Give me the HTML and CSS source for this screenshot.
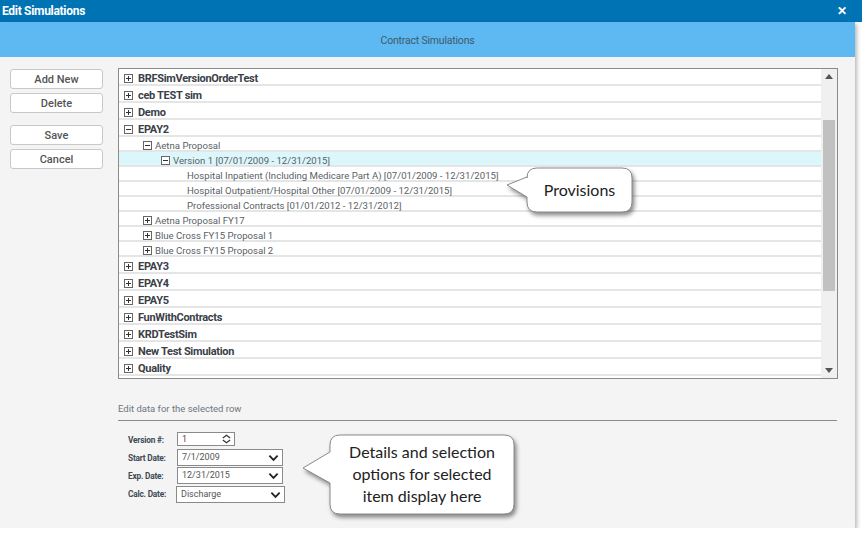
FILE: index.html
```html
<!DOCTYPE html>
<html lang="en">
<head>
  <meta charset="UTF-8">
  <meta name="viewport" content="width=device-width, initial-scale=1.0">
  <title>Edit Simulations</title>
  <link rel="stylesheet" href="styles.css">
</head>
<body>
  <div class="titlebar">
    <span class="title">Edit Simulations</span>
    <span class="close">&#x2715;</span>
  </div>
  <div class="dialog">
    <div class="band">Contract Simulations</div>
    <div class="content">
      <div class="top">
        <div class="actions">
          <button class="btn">Add New</button>
          <button class="btn">Delete</button>
          <button class="btn gap">Save</button>
          <button class="btn">Cancel</button>
        </div>
        <div class="tree">
          <div class="rows">
            <div class="row l1"><svg class="ico" viewBox="0 0 9 9"><rect x="0.5" y="0.5" width="8" height="8"/><path d="M2 4.5h5M4.5 2v5"/></svg><span>BRFSimVersionOrderTest</span></div>
            <div class="row l1"><svg class="ico" viewBox="0 0 9 9"><rect x="0.5" y="0.5" width="8" height="8"/><path d="M2 4.5h5M4.5 2v5"/></svg><span>ceb TEST sim</span></div>
            <div class="row l1"><svg class="ico" viewBox="0 0 9 9"><rect x="0.5" y="0.5" width="8" height="8"/><path d="M2 4.5h5M4.5 2v5"/></svg><span>Demo</span></div>
            <div class="row l1"><svg class="ico" viewBox="0 0 9 9"><rect x="0.5" y="0.5" width="8" height="8"/><path d="M2 4.5h5"/></svg><span>EPAY2</span></div>
            <div class="row l2"><svg class="ico" viewBox="0 0 9 9"><rect x="0.5" y="0.5" width="8" height="8"/><path d="M2 4.5h5"/></svg><span>Aetna Proposal</span></div>
            <div class="row l3 selected"><svg class="ico" viewBox="0 0 9 9"><rect x="0.5" y="0.5" width="8" height="8"/><path d="M2 4.5h5"/></svg><span>Version 1 [07/01/2009 - 12/31/2015]</span></div>
            <div class="row l4"><span>Hospital Inpatient (Including Medicare Part A) [07/01/2009 - 12/31/2015]</span></div>
            <div class="row l4"><span>Hospital Outpatient/Hospital Other [07/01/2009 - 12/31/2015]</span></div>
            <div class="row l4"><span>Professional Contracts [01/01/2012 - 12/31/2012]</span></div>
            <div class="row l2"><svg class="ico" viewBox="0 0 9 9"><rect x="0.5" y="0.5" width="8" height="8"/><path d="M2 4.5h5M4.5 2v5"/></svg><span>Aetna Proposal FY17</span></div>
            <div class="row l2"><svg class="ico" viewBox="0 0 9 9"><rect x="0.5" y="0.5" width="8" height="8"/><path d="M2 4.5h5M4.5 2v5"/></svg><span>Blue Cross FY15 Proposal 1</span></div>
            <div class="row l2"><svg class="ico" viewBox="0 0 9 9"><rect x="0.5" y="0.5" width="8" height="8"/><path d="M2 4.5h5M4.5 2v5"/></svg><span>Blue Cross FY15 Proposal 2</span></div>
            <div class="row l1"><svg class="ico" viewBox="0 0 9 9"><rect x="0.5" y="0.5" width="8" height="8"/><path d="M2 4.5h5M4.5 2v5"/></svg><span>EPAY3</span></div>
            <div class="row l1"><svg class="ico" viewBox="0 0 9 9"><rect x="0.5" y="0.5" width="8" height="8"/><path d="M2 4.5h5M4.5 2v5"/></svg><span>EPAY4</span></div>
            <div class="row l1"><svg class="ico" viewBox="0 0 9 9"><rect x="0.5" y="0.5" width="8" height="8"/><path d="M2 4.5h5M4.5 2v5"/></svg><span>EPAY5</span></div>
            <div class="row l1"><svg class="ico" viewBox="0 0 9 9"><rect x="0.5" y="0.5" width="8" height="8"/><path d="M2 4.5h5M4.5 2v5"/></svg><span>FunWithContracts</span></div>
            <div class="row l1"><svg class="ico" viewBox="0 0 9 9"><rect x="0.5" y="0.5" width="8" height="8"/><path d="M2 4.5h5M4.5 2v5"/></svg><span>KRDTestSim</span></div>
            <div class="row l1"><svg class="ico" viewBox="0 0 9 9"><rect x="0.5" y="0.5" width="8" height="8"/><path d="M2 4.5h5M4.5 2v5"/></svg><span>New Test Simulation</span></div>
            <div class="row l1"><svg class="ico" viewBox="0 0 9 9"><rect x="0.5" y="0.5" width="8" height="8"/><path d="M2 4.5h5M4.5 2v5"/></svg><span>Quality</span></div>
          </div>
          <div class="scrollbar">
            <svg class="arrow" viewBox="0 0 8 5"><path d="M0 5L4 0L8 5Z"/></svg>
            <div class="track"><div class="thumb"></div></div>
            <svg class="arrow" viewBox="0 0 8 5"><path d="M0 0L4 5L8 0Z"/></svg>
          </div>
        </div>
      </div>

      <div class="edit">
        <div class="edit-title">Edit data for the selected row</div>
        <div class="form">
          <div class="field">
            <label>Version #:</label>
            <div class="input short">1
              <svg class="spin" viewBox="0 0 12 10"><path d="M2 4L6 1L10 4M2 6L6 9L10 6"/></svg>
            </div>
          </div>
          <div class="field">
            <label>Start Date:</label>
            <div class="input select">7/1/2009
              <svg class="chev" viewBox="0 0 12 8"><path d="M1.5 1.5L6 6L10.5 1.5"/></svg>
            </div>
          </div>
          <div class="field">
            <label>Exp. Date:</label>
            <div class="input select">12/31/2015
              <svg class="chev" viewBox="0 0 12 8"><path d="M1.5 1.5L6 6L10.5 1.5"/></svg>
            </div>
          </div>
          <div class="field">
            <label>Calc. Date:</label>
            <div class="input select wide">Discharge
              <svg class="chev" viewBox="0 0 12 8"><path d="M1.5 1.5L6 6L10.5 1.5"/></svg>
            </div>
          </div>
        </div>
      </div>

      <div class="callout callout-provisions">
        <svg class="bubble" viewBox="0 0 135 52">
          <path d="M32 2H117Q127 2 127 12V36Q127 46 117 46H32Q22 46 22 36V31L2 19L22 11V12Q22 2 32 2Z"/>
        </svg>
        <div class="callout-text">Provisions</div>
      </div>

      <div class="callout callout-details">
        <svg class="bubble" viewBox="0 0 220 88">
          <path d="M39 2H203Q213 2 213 12V71Q213 81 203 81H39Q29 81 29 71V50L2 35L29 19V12Q29 2 39 2Z"/>
        </svg>
        <div class="callout-text">Details and selection<br>options for selected<br>item display here</div>
      </div>
    </div>
  </div>
</body>
</html>
```

FILE: styles.css
```css
body {
  margin: 0;
  background: #fff;
  font-family: Roboto, "Liberation Sans", sans-serif;
}
.titlebar {
  height: 22px;
  background-color: #0073b4;
  color: #fff;
  display: flex;
  align-items: center;
  justify-content: space-between;
  padding: 0 15px 0 2px;
}
.title {
  font-weight: bold;
  font-size: 12px;
  letter-spacing: -0.3px;
}
.close {
  font-size: 12px;
  font-weight: bold;
}
.dialog {
  width: 855px;
  box-shadow: 2px 2px 4px rgba(0, 0, 0, 0.28);
}
.band {
  height: 35px;
  background-color: #5eb8f1;
  color: #3f5a6e;
  font-size: 10.5px;
  letter-spacing: -0.2px;
  text-align: center;
  line-height: 37px;
}
.content {
  position: relative;
  height: 471px;
  background-color: #f4f4f4;
  padding-top: 11px;
  box-sizing: border-box;
}
.top {
  display: flex;
}
.actions {
  width: 93px;
  margin-left: 10px;
  margin-top: 1px;
  display: flex;
  flex-direction: column;
}
.btn {
  height: 20px;
  margin-bottom: 4px;
  background: #fff;
  border: 1px solid #c8c8c8;
  border-radius: 3px;
  font-family: Roboto, sans-serif;
  font-size: 11px;
  font-weight: 500;
  color: #555;
  padding: 0;
}
.gap {
  margin-top: 8px;
}
.tree {
  margin-left: 15px;
  width: 720px;
  height: 311px;
  border: 1px solid #8a8a8a;
  box-sizing: border-box;
  background: #fff;
  display: flex;
  overflow: hidden;
}
.rows {
  width: 702px;
}
.row {
  display: flex;
  align-items: center;
  box-sizing: border-box;
  border-bottom: 2px solid #e5e5e5;
  white-space: nowrap;
}
.row.l1 {
  height: 17px;
  padding-left: 5px;
  padding-top: 4px;
  font-weight: bold;
  font-size: 11px;
  letter-spacing: -0.3px;
  color: #3a4047;
}
.row.l2, .row.l3, .row.l4 {
  height: 15px;
  padding-top: 3px;
  font-size: 9.6px;
  color: #5a5f66;
}
.row.l2 {
  padding-left: 24px;
}
.row.l3 {
  padding-left: 42px;
}
.row.l4 {
  padding-left: 68px;
}
.selected {
  background-color: #dcf7fc;
}
.ico {
  width: 9px;
  height: 9px;
  margin-right: 5px;
  flex: none;
}
.ico rect {
  fill: #fff;
  stroke: #666;
}
.ico path {
  stroke: #333;
  stroke-width: 1;
}
.l2 .ico, .l3 .ico {
  margin-right: 3px;
}
.scrollbar {
  width: 16px;
  background-color: #f0f0f0;
  display: flex;
  flex-direction: column;
  align-items: center;
}
.arrow {
  width: 8px;
  height: 5px;
  fill: #555;
  margin: 5px 0;
}
.track {
  flex: 1;
  width: 100%;
}
.thumb {
  margin: 36px 2px 0 2px;
  height: 171px;
  background-color: #c1c1c1;
}
.edit {
  margin-left: 118px;
  width: 719px;
  margin-top: 24px;
}
.edit-title {
  font-size: 9.5px;
  color: #6e7780;
  padding-bottom: 6px;
  border-bottom: 1px solid #8a8a8a;
}
.form {
  padding-top: 11px;
}
.field {
  display: flex;
  align-items: center;
  margin-bottom: 1px;
}
.field label {
  width: 59px;
  padding-left: 10px;
  text-align: left;
  font-size: 8.3px;
  font-weight: bold;
  color: #404a55;
  letter-spacing: -0.2px;
  box-sizing: border-box;
}
.input {
  position: relative;
  height: 17px;
  width: 106px;
  box-sizing: border-box;
  border: 1px solid #8a8a8a;
  background: #fff;
  font-size: 9px;
  color: #555;
  padding-left: 4px;
  line-height: 15px;
}
.input.short {
  width: 58px;
  height: 14px;
  line-height: 12px;
  color: #733;
  margin-bottom: 2px;
}
.input.wide {
  width: 109px;
  margin-left: -1px;
  margin-top: 1px;
}
.chev {
  position: absolute;
  right: 3px;
  top: 4px;
  width: 11px;
  height: 8px;
  fill: none;
  stroke: #222;
  stroke-width: 2;
}
.spin {
  position: absolute;
  right: 2px;
  top: 1px;
  width: 11px;
  height: 10px;
  fill: none;
  stroke: #333;
  stroke-width: 1.3;
}
.callout {
  position: absolute;
}
.bubble {
  display: block;
  width: 100%;
  height: 100%;
  overflow: visible;
  filter: drop-shadow(2px 3px 2px rgba(0, 0, 0, 0.45));
}
.bubble path {
  fill: #fff;
  stroke: #8a8a8a;
  stroke-width: 1;
}
.callout-text {
  position: absolute;
  font-family: Lato, "Open Sans", sans-serif;
  font-size: 16px;
  color: #222;
  text-align: center;
}
.callout-provisions {
  left: 505px;
  top: 109px;
  width: 135px;
  height: 52px;
}
.callout-provisions .callout-text {
  left: 22px;
  top: 2px;
  width: 105px;
  line-height: 44px;
}
.callout-details {
  left: 301px;
  top: 376px;
  width: 220px;
  height: 88px;
}
.callout-details .callout-text {
  left: 29px;
  top: 8px;
  width: 184px;
  line-height: 22px;
}
```
